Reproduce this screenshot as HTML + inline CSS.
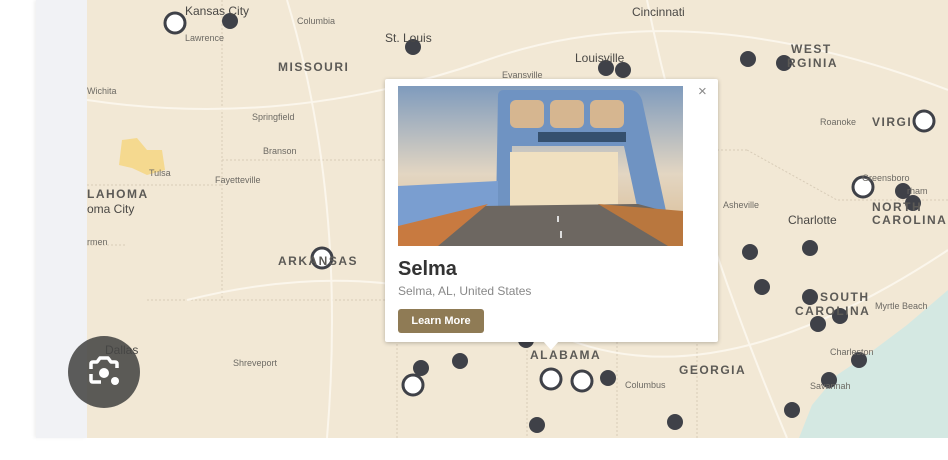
<!DOCTYPE html>
<html><head><meta charset="utf-8"><style>
body{margin:0;width:948px;height:460px;background:#fff;position:relative;overflow:hidden;font-family:"Liberation Sans",sans-serif}
.gray{position:absolute;left:36px;top:0;width:51px;height:438px;background:#f1f2f5;box-shadow:-2px 0 3px rgba(0,0,0,.06)}
.map{position:absolute;left:87px;top:0;width:861px;height:438px;background:#f2e8d5;overflow:hidden}
.lbl{position:absolute;color:#6d6a64;font-size:9px;white-space:nowrap}
.st{position:absolute;color:#5c5a56;font-size:12px;font-weight:bold;letter-spacing:1.5px;white-space:nowrap}
.city{position:absolute;color:#4a4845;font-size:12px;white-space:nowrap}
.pop{position:absolute;left:385px;top:79px;width:333px;height:263px;background:#fff;box-shadow:0 1px 4px rgba(0,0,0,.25);border-radius:2px}
.cam{position:absolute;left:68px;top:336px;width:72px;height:72px;border-radius:50%;background:rgba(70,70,68,.88)}
</style></head><body>
<div class="gray"></div>
<div class="map">
<svg width="861" height="438" style="position:absolute;left:0;top:0">
<polygon points="861,290 820,325 780,355 750,375 725,405 712,438 861,438" fill="#d4e8e2"/>
<polygon points="35,140 50,138 60,150 75,150 78,170 60,175 45,168 32,165" fill="#f5d98f"/>
<g stroke="#d8ccb8" stroke-width="1" fill="none" stroke-dasharray="2,2">
<path d="M135 0 V160 H310"/><path d="M0 185 H135"/><path d="M135 160 V300"/><path d="M310 160 V300 H60"/><path d="M310 300 V438"/><path d="M440 150 V438"/><path d="M530 150 V438"/><path d="M610 200 V438"/><path d="M470 150 H660"/><path d="M660 150 L750 200 L861 200"/><path d="M0 245 H40"/>
</g>
<g stroke="#fbf6ec" stroke-width="2" fill="none">
<path d="M0 100 Q200 130 400 60 T861 90"/><path d="M100 300 Q300 250 460 330 T861 250"/><path d="M200 0 Q260 200 240 438"/><path d="M560 0 Q600 200 700 438"/>
</g>
<g fill="#3f4148">
<circle cx="143" cy="21" r="8"/><circle cx="326" cy="47" r="8"/><circle cx="519" cy="68" r="8"/><circle cx="536" cy="70" r="8"/><circle cx="661" cy="59" r="8"/><circle cx="697" cy="63" r="8"/><circle cx="373" cy="361" r="8"/><circle cx="334" cy="368" r="8"/><circle cx="521" cy="378" r="8"/><circle cx="450" cy="425" r="8"/><circle cx="588" cy="422" r="8"/><circle cx="663" cy="252" r="8"/><circle cx="675" cy="287" r="8"/><circle cx="723" cy="248" r="8"/><circle cx="723" cy="297" r="8"/><circle cx="731" cy="324" r="8"/><circle cx="753" cy="316" r="8"/><circle cx="772" cy="360" r="8"/><circle cx="742" cy="380" r="8"/><circle cx="705" cy="410" r="8"/><circle cx="816" cy="191" r="8"/><circle cx="826" cy="203" r="8"/><circle cx="439" cy="340" r="8"/>
</g>
<g fill="#fff" stroke="#3f4148" stroke-width="3">
<circle cx="88" cy="23" r="10"/><circle cx="235" cy="258" r="10"/><circle cx="837" cy="121" r="10"/><circle cx="776" cy="187" r="10"/><circle cx="464" cy="379" r="10"/><circle cx="495" cy="381" r="10"/><circle cx="326" cy="385" r="10"/>
</g>
</svg>
<div class="city" style="left:98px;top:4px">Kansas City</div>
<div class="lbl" style="left:98px;top:33px">Lawrence</div>
<div class="lbl" style="left:210px;top:16px">Columbia</div>
<div class="city" style="left:298px;top:31px">St. Louis</div>
<div class="city" style="left:545px;top:5px">Cincinnati</div>
<div class="city" style="left:488px;top:51px">Louisville</div>
<div class="lbl" style="left:415px;top:70px">Evansville</div>
<div class="st" style="left:191px;top:60px">MISSOURI</div>
<div class="st" style="left:704px;top:42px">WEST</div>
<div class="st" style="left:700px;top:56px">RGINIA</div>
<div class="st" style="left:785px;top:115px">VIRGI</div>
<div class="lbl" style="left:0px;top:86px">Wichita</div>
<div class="lbl" style="left:165px;top:112px">Springfield</div>
<div class="lbl" style="left:176px;top:146px">Branson</div>
<div class="lbl" style="left:62px;top:168px">Tulsa</div>
<div class="lbl" style="left:128px;top:175px">Fayetteville</div>
<div class="st" style="left:0px;top:187px">LAHOMA</div>
<div class="city" style="left:0px;top:202px">oma City</div>
<div class="lbl" style="left:0px;top:237px">rmen</div>
<div class="st" style="left:191px;top:254px">ARKANSAS</div>
<div class="lbl" style="left:733px;top:117px">Roanoke</div>
<div class="lbl" style="left:775px;top:173px">Greensboro</div>
<div class="lbl" style="left:820px;top:186px">rham</div>
<div class="lbl" style="left:636px;top:200px">Asheville</div>
<div class="city" style="left:701px;top:213px">Charlotte</div>
<div class="st" style="left:785px;top:200px">NORTH</div>
<div class="st" style="left:785px;top:213px">CAROLINA</div>
<div class="st" style="left:733px;top:290px">SOUTH</div>
<div class="st" style="left:708px;top:304px">CAROLINA</div>
<div class="lbl" style="left:788px;top:301px">Myrtle Beach</div>
<div class="lbl" style="left:743px;top:347px">Charleston</div>
<div class="lbl" style="left:723px;top:381px">Savannah</div>
<div class="st" style="left:592px;top:363px">GEORGIA</div>
<div class="st" style="left:443px;top:348px">ALABAMA</div>
<div class="lbl" style="left:538px;top:380px">Columbus</div>
<div class="lbl" style="left:146px;top:358px">Shreveport</div>
<div class="city" style="left:18px;top:343px">Dallas</div>
</div>
<div class="cam">
<svg width="72" height="72" viewBox="0 0 72 72"><g fill="none" stroke="#fff" stroke-width="3.5" stroke-linejoin="round"><path d="M23 33 V28 Q23 26 25 26 H29 L32 22 H40 L43 26 H47 Q49 26 49 28 V32"/><path d="M23 38 V44 Q23 46 25 46 H33"/></g><circle cx="36" cy="37" r="5" fill="#fff"/><circle cx="47" cy="45" r="4" fill="#fff"/></svg>
</div>
<div class="pop">
<svg width="285" height="160" style="position:absolute;left:13px;top:7px">
<defs><linearGradient id="sk" x1="0" y1="0" x2="0" y2="1"><stop offset="0" stop-color="#7f9bbd"/><stop offset=".55" stop-color="#e3d6c2"/><stop offset="1" stop-color="#d9b98f"/></linearGradient></defs>
<rect width="285" height="160" fill="url(#sk)"/>
<path d="M98 125 L100 10 Q100 4 106 4 H232 Q240 4 244 14 L268 125 H240 L226 60 H114 L112 125 Z" fill="#6f93c2"/>
<g fill="#d6b690"><rect x="112" y="14" width="34" height="28" rx="6"/><rect x="152" y="14" width="34" height="28" rx="6"/><rect x="192" y="14" width="34" height="28" rx="6"/></g>
<rect x="112" y="66" width="108" height="56" fill="#f0e0c0"/>
<rect x="140" y="46" width="88" height="10" fill="#35506e"/>
<polygon points="0,100 100,95 100,120 0,140" fill="#7a9ed0"/>
<polygon points="0,160 85,120 240,118 285,130 285,160" fill="#6d6761"/>
<polygon points="0,160 0,140 90,118 40,160" fill="#c87a40"/>
<polygon points="200,118 285,125 285,160 270,160" fill="#b9773e"/>
<g stroke="#ddd" stroke-width="2"><path d="M160 130 V136"/><path d="M163 145 V152"/></g>
</svg>
<div style="position:absolute;left:313px;top:4px;font-size:15px;color:#888">×</div>
<div style="position:absolute;left:13px;top:179px;font-size:20px;font-weight:bold;color:#333">Selma</div>
<div style="position:absolute;left:13px;top:205px;font-size:12px;color:#888">Selma, AL, United States</div>
<div style="position:absolute;left:13px;top:230px;width:86px;height:24px;background:#8f7b55;border-radius:3px;color:#fff;font-size:11px;font-weight:bold;line-height:24px;text-align:center">Learn More</div>
<div style="position:absolute;left:158px;top:262px;width:0;height:0;border-left:8px solid transparent;border-right:8px solid transparent;border-top:9px solid #fff"></div>
</div>
</body></html>
